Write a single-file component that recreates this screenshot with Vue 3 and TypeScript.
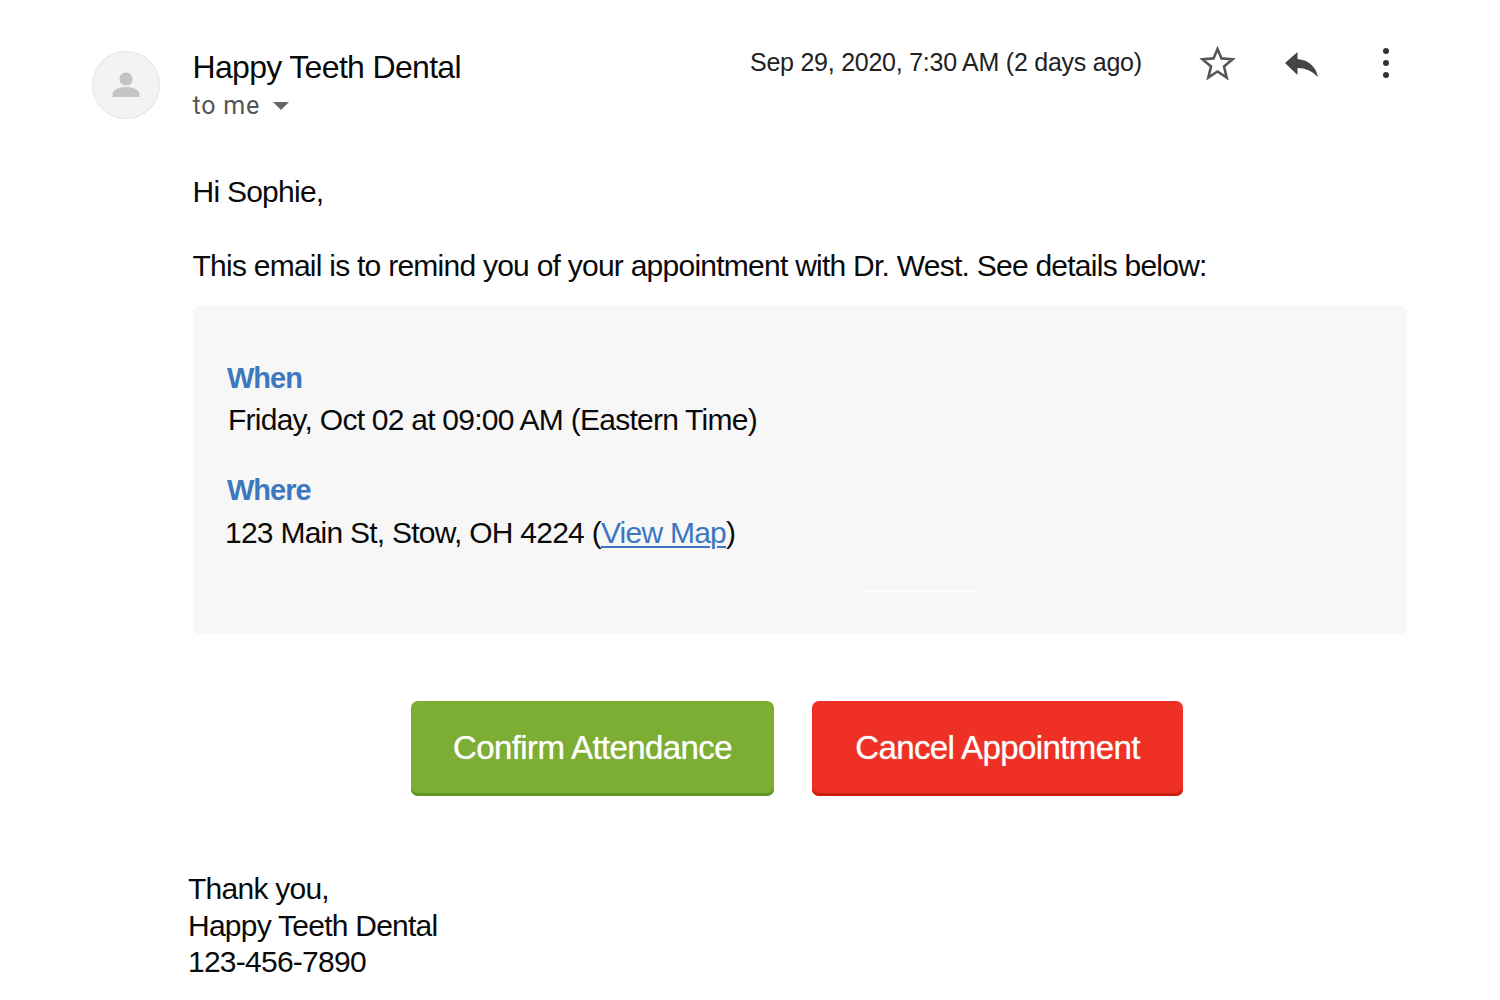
<script setup lang="ts">
// leftover specks along the cut-off line at the bottom of the card
const specks = [
  { left: 122, width: 8 },
  { left: 226, width: 3 },
  { left: 359, width: 3 },
  { left: 538, width: 3 },
  { left: 666, width: 118 },
  { left: 791, width: 3 },
  { left: 801, width: 3 },
]
</script>

<template>
  <div class="mail">
    <header class="head">
      <div class="avatar">
        <svg width="30" height="30" viewBox="0 0 30 30">
          <circle cx="15" cy="9" r="6.6" fill="#c4c4c4" />
          <path d="M1.6 27v-3.4c0-4.4 8-6.6 13.400-6.6s13.400 2.200 13.400 6.600V27z" fill="#c4c4c4" />
        </svg>
      </div>
      <div class="sender">
        <div class="name">Happy Teeth Dental</div>
        <div class="to">to me <span class="caret"></span></div>
      </div>
      <div class="date">Sep 29, 2020, 7:30 AM (2 days ago)</div>
      <div class="actions">
        <svg class="star" width="38" height="38" viewBox="0 0 38 38">
          <path d="M18.500 6L22.500 15.400 33.500 16.300 25 23.500 27.700 34.500 18.500 28.500 9.300 34.500 12 23.500 3.500 16.300 14.500 15.400z" fill="none" stroke="#555" stroke-width="2.600" stroke-linejoin="miter" />
        </svg>
        <svg class="reply" width="36" height="30" viewBox="0 0 36 30">
          <path d="M13.500 4L1 15 13.500 27V20C21 20 28 23 34 29 32 19 25 12 13.500 11z" fill="#444" />
        </svg>
        <div class="dots"><i></i><i></i><i></i></div>
      </div>
    </header>

    <p class="hi">Hi Sophie,</p>
    <p class="intro">This email is to remind you of your appointment with Dr. West. See details below:</p>

    <section class="card">
      <h3 class="label when">When</h3>
      <div class="line first">Friday, Oct 02 at 09:00 AM (Eastern Time)</div>
      <h3 class="label where">Where</h3>
      <div class="line second">123 Main St, Stow, OH 4224 (<a class="map">View Map</a>)</div>
      <span
        v-for="s in specks"
        :key="s.left"
        class="speck"
        :style="{ left: s.left + 'px', width: s.width + 'px' }"
      ></span>
    </section>

    <div class="btns">
      <button class="btn green">Confirm Attendance</button>
      <button class="btn red">Cancel Appointment</button>
    </div>

    <footer class="sign">
      <div>Thank you,</div>
      <div>Happy Teeth Dental</div>
      <div>123-456-7890</div>
    </footer>
  </div>
</template>

<style>
html, body { background: #fff; }
</style>

<style scoped>
.mail {
  width: 1500px;
  height: 1000px;
  overflow: hidden;
  box-sizing: border-box;
  padding: 43px 93px 0 92px;
  font-family: "Liberation Sans", Arial, sans-serif;
  color: #0a0a0a;
}
.head {
  display: flex;
  align-items: flex-start;
  height: 76px;
}
.avatar {
  width: 68px;
  height: 68px;
  margin-top: 8px;
  border-radius: 50%;
  background: #f3f3f3;
  box-shadow: inset 0 0 1px 1px #e6e6e6;
  display: flex;
  align-items: center;
  justify-content: center;
  flex: none;
}
.sender {
  margin-left: 32.500px;
  width: 300.500px;
  padding-top: 1px;
}
.name {
  font-size: 32px;
  line-height: 46px;
  letter-spacing: -0.67px;
}
.to {
  font-family: Roboto, sans-serif;
  font-size: 25px;
  line-height: 31px;
  color: #53565a;
  display: flex;
  align-items: center;
  gap: 13px;
  letter-spacing: 0.8px;
}
.caret {
  width: 0;
  height: 0;
  border-left: 8px solid transparent;
  border-right: 8px solid transparent;
  border-top: 8px solid #666;
}
.date {
  margin-left: 257px;
  margin-top: -1px;
  font-size: 25px;
  line-height: 40px;
  letter-spacing: -0.25px;
  white-space: nowrap;
  color: #222;
}
.actions {
  display: flex;
  align-items: flex-start;
  margin-left: 57px;
}
.dots {
  display: flex;
  flex-direction: column;
  gap: 6px;
  margin: 5px 0 0 63px;
}
.dots i {
  width: 6px;
  height: 6px;
  border-radius: 50%;
  background: #333;
}
.reply {
  margin: 5px 0 0 47px;
}
.hi, .intro, .line, .sign {
  font-size: 30px;
  letter-spacing: -0.75px;
}
.hi {
  margin: 53px 0 0 100.500px;
  line-height: 40px;
}
.intro {
  margin: 34px 0 0 100.500px;
  line-height: 40px;
  white-space: nowrap;
}
.card {
  position: relative;
  margin: 20px 0 0 101px;
  height: 328px;
  box-sizing: border-box;
  padding: 52px 0 0 34px;
  background: #f7f7f7;
  border-radius: 6px;
}
.label {
  margin: 0;
  font-size: 29px;
  line-height: 40px;
  font-weight: 700;
  color: #3b78c0;
  letter-spacing: -1px;
}
.line {
  line-height: 42px;
}
.first { margin: 1px 0 0 1px; }
.where { margin-top: 29px; }
.second { margin: 2px 0 0 -2px; }
.map {
  color: #3b78c0;
  text-decoration: underline;
  text-decoration-thickness: 2px;
  text-underline-offset: 3px;
}
.speck {
  position: absolute;
  top: 285px;
  height: 1px;
  background: #fff;
  opacity: 0.8;
}
.btns {
  display: flex;
  gap: 38px;
  margin: 67px 0 0 319px;
}
.btn {
  height: 95px;
  border: none;
  border-radius: 7px;
  color: #fff;
  font-family: "Liberation Sans", Arial, sans-serif;
  font-size: 33px;
  letter-spacing: -0.6px;
  padding: 0 0 2px;
  text-shadow: 0 0 1px rgba(255, 255, 255, 0.7);
}
.green {
  width: 363px;
  background: #7cae33;
  box-shadow: inset 0 -3px 1px #5f9524;
}
.red {
  width: 371px;
  background: #ee3124;
  box-shadow: inset 0 -3px 1px #cc1d12;
}
.sign {
  margin: 75px 0 0 96px;
  line-height: 36.5px;
}
</style>
